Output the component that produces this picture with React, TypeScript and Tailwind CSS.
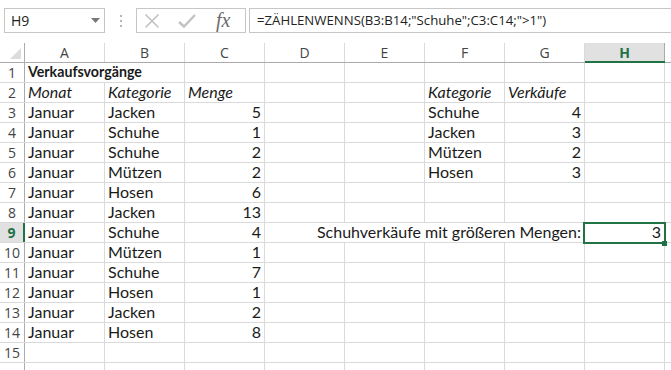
import React from "react";

type Cell = { t: string; b?: boolean; i?: boolean; r?: boolean };
type Row = Record<string, Cell>;

const COLS = ["A", "B", "C", "D", "E", "F", "G", "H"];

const B = ["Jacken", "Schuhe", "Schuhe", "Mützen", "Hosen", "Jacken", "Schuhe", "Mützen", "Schuhe", "Hosen", "Jacken", "Hosen"];
const C = [5, 1, 2, 2, 6, 13, 4, 1, 7, 1, 2, 8];
const F = ["Schuhe", "Jacken", "Mützen", "Hosen"];
const G = [4, 3, 2, 3];

function buildRows(): Row[] {
  const rows: Row[] = [];
  rows.push({});
  rows.push({
    A: { t: "Monat", i: true },
    B: { t: "Kategorie", i: true },
    C: { t: "Menge", i: true },
    F: { t: "Kategorie", i: true },
    G: { t: "Verkäufe", i: true },
  });
  for (let k = 0; k < 12; k++) {
    const r: Row = {
      A: { t: "Januar" },
      B: { t: B[k] },
      C: { t: String(C[k]), r: true },
    };
    if (k < 4) {
      r.F = { t: F[k] };
      r.G = { t: String(G[k]), r: true };
    }
    rows.push(r);
  }
  rows.push({});
  rows.push({});
  return rows;
}

const font = { fontFamily: '"Lato", "Open Sans", sans-serif' };
const uiFont = { fontFamily: '"Open Sans", "Noto Sans", sans-serif' };

function CellView({ c, w = "w-[80px]" }: { c?: Cell; w?: string }) {
  return (
    <div
      className={
        w +
        " shrink-0 border-r border-[#dadada] flex items-end pb-[1px] px-[3px] overflow-hidden whitespace-nowrap leading-[18px] text-[#1a1a1a] " +
        (c?.r ? "justify-end" : "justify-start") +
        (c?.b ? " font-bold text-[14.2px]" : " text-[16px]") +
        (c?.i ? " italic" : "")
      }
      style={font}
    >
      {c?.t ?? ""}
    </div>
  );
}

export default function App() {
  const rows = buildRows();
  return (
    <div className="w-[671px] h-[370px] overflow-hidden bg-white relative">
      {/* formula bar */}
      <div className="h-[43px] flex items-start pt-[8px]">
        <div className="ml-[4px] w-[101px] h-[25px] border border-[#c6c6c6] flex items-center justify-between pl-[6px] pr-[4px]">
          <span className="text-[14px] text-[#222]" style={uiFont}>H9</span>
          <svg width="9" height="5" viewBox="0 0 9 5"><path d="M0 0 H9 L4.5 5 Z" fill="#777" /></svg>
        </div>
        <div className="w-[31px] h-[25px] flex flex-col items-center justify-center gap-[3px]">
          <span className="w-[2px] h-[2px] bg-[#b5b5b5]" />
          <span className="w-[2px] h-[2px] bg-[#b5b5b5]" />
          <span className="w-[2px] h-[2px] bg-[#b5b5b5]" />
        </div>
        <div className="w-[110px] h-[25px] border border-[#c6c6c6] flex items-center">
          <svg width="16" height="16" viewBox="0 0 16 16" className="ml-[7px]">
            <path d="M1.5 1.5 L14.5 14.5 M14.5 1.5 L1.5 14.5" stroke="#c2c2c2" strokeWidth="1.6" />
          </svg>
          <svg width="18" height="16" viewBox="0 0 18 16" className="ml-[18px]">
            <path d="M1 9 L6 13.5 L17 2" stroke="#c2c2c2" strokeWidth="2.4" fill="none" />
          </svg>
          <span
            className="ml-[20px] italic text-[20px] leading-none text-[#6b6b6b] -mt-[2px]"
            style={{ fontFamily: '"Liberation Serif", "DejaVu Serif", serif' }}
          >
            fx
          </span>
        </div>
        <div className="ml-[3px] flex-1 h-[25px] border border-r-0 border-[#c6c6c6] flex items-center pl-[7px]">
          <span className="text-[13.2px] text-[#222] whitespace-nowrap" style={uiFont}>
            =ZÄHLENWENNS(B3:B14;"Schuhe";C3:C14;"&gt;1")
          </span>
        </div>
      </div>

      {/* column headers */}
      <div className="flex h-[20px] border-b border-[#ababab]">
        <div className="w-[25px] shrink-0 border-r border-[#ababab] relative">
          <svg width="11" height="11" viewBox="0 0 11 11" className="absolute right-[3px] bottom-[3px]">
            <path d="M11 0 L11 11 L0 11 Z" fill="#dcdcdc" />
          </svg>
        </div>
        {COLS.map((c) =>
          c === "H" ? (
            <div
              key={c}
              className="w-[80px] shrink-0 bg-[#e1e1e1] border-r border-[#ababab] flex items-center justify-center text-[14px] font-bold text-[#217346] relative"
              style={uiFont}
            >
              {c}
              <div className="absolute left-0 right-[-1px] bottom-[-1px] h-[2px] bg-[#217346]" />
            </div>
          ) : (
            <div
              key={c}
              className="w-[80px] shrink-0 border-r border-[#dadada] flex items-center justify-center text-[14px] text-[#444]"
              style={uiFont}
            >
              {c}
            </div>
          )
        )}
        <div className="flex-1" />
      </div>

      {/* rows */}
      {rows.map((row, idx) => {
        const n = idx + 1;
        const sel = n === 9;
        return (
          <div key={n} className="flex h-[20px] border-b border-[#dadada]">
            <div
              className={
                "w-[25px] shrink-0 flex items-center justify-center text-[14px] relative " +
                (sel
                  ? "bg-[#e1e1e1] font-bold text-[#217346] border-r-2 border-[#217346]"
                  : "text-[#444] border-r border-[#ababab]")
              }
              style={uiFont}
            >
              {n <= 15 ? n : ""}
            </div>
            {n === 1 ? (
              <>
                <CellView w="w-[160px]" c={{ t: "Verkaufsvorgänge", b: true }} />
                {COLS.slice(2).map((c) => (
                  <CellView key={c} />
                ))}
              </>
            ) : sel ? (
              <>
                <CellView c={{ t: "Januar" }} />
                <CellView c={{ t: "Schuhe" }} />
                <CellView c={{ t: "4", r: true }} />
                <CellView w="w-[320px]" c={{ t: "Schuhverkäufe mit größeren Mengen:", r: true }} />
                <div
                  className="w-[80px] shrink-0 border-r border-[#dadada] flex items-end justify-end pb-[1px] px-[3px] text-[16px] leading-[18px] text-[#1a1a1a] relative"
                  style={font}
                >
                  3
                  <div className="absolute left-[-2px] top-[-1px] w-[83px] h-[22px] border-2 border-[#217346]" />
                  <div className="absolute left-[77px] top-[18px] w-[5px] h-[5px] bg-[#217346]" />
                </div>
              </>
            ) : (
              COLS.map((c) => <CellView key={c} c={row[c]} />)
            )}
            <div className="flex-1" />
          </div>
        );
      })}
    </div>
  );
}
